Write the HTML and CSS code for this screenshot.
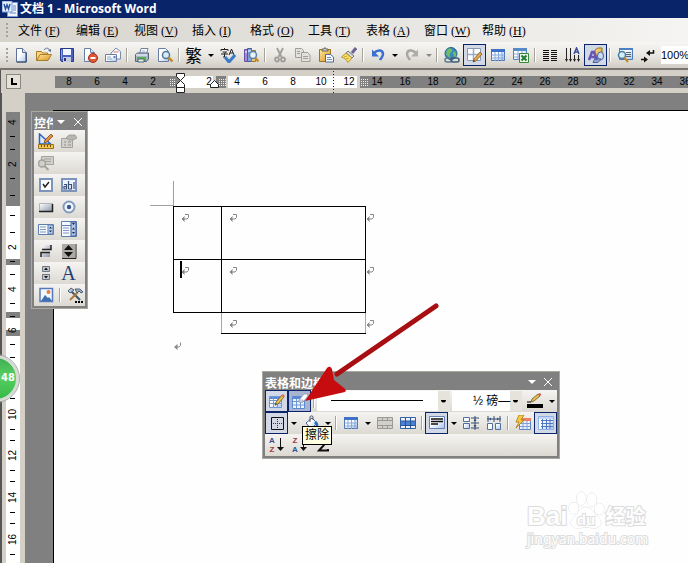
FILE: index.html
```html
<!DOCTYPE html>
<html lang="zh-CN">
<head>
<meta charset="utf-8">
<title>文档 1 - Microsoft Word</title>
<link rel="stylesheet" href="styles.css">
</head>
<body>
<svg class="sprite" aria-hidden="true">
  <defs>
    <linearGradient id="sheet" x1="0" y1="0" x2="1" y2="1"><stop offset=".4" stop-color="#fff"/><stop offset="1" stop-color="#a9c4ec"/></linearGradient>
    <linearGradient id="metal" x1="0" y1="0" x2="1" y2="1"><stop offset="0" stop-color="#fff"/><stop offset="1" stop-color="#8a94a6"/></linearGradient>
    <linearGradient id="gold" x1="0" y1="0" x2="1" y2="1"><stop offset="0" stop-color="#ffe9a0"/><stop offset="1" stop-color="#d8941c"/></linearGradient>
  </defs>
  <symbol id="new" viewBox="0 0 16 16"><path d="M3.500 1.500h6l4 4v9.500h-10z" fill="url(#sheet)" stroke="#5b7199"/><path d="M9.500 1.500v4h4" fill="#d5e2f6" stroke="#5b7199"/><path d="M13 6v9H4" fill="none" stroke="#2c3f66"/></symbol>
  <symbol id="open" viewBox="0 0 16 16"><path d="M.5 13.500V4.500h5l1 1.500h5v3" fill="#f8d878" stroke="#a97c2a"/><path d="M.8 13.500L4 7.500h11.500l-3.500 6z" fill="url(#gold)" stroke="#a97c2a"/><path d="M8 3c2-3 5-2 6 1" fill="none" stroke="#5b7199"/><path d="M12 3.500l3 1.500V2z" fill="#5b7199"/></symbol>
  <symbol id="save" viewBox="0 0 16 16"><path d="M1.500 1.500h13v13h-12l-1-1z" fill="#4b62bd" stroke="#2a3a8a"/><path d="M4 2h8v6H4z" fill="#f2f6ff"/><path d="M4 10h8v5H4z" fill="#c4cbe2"/><path d="M5 11h2v3H5z" fill="#26327a"/><path d="M2.500 3v9" stroke="#8d9ee8"/></symbol>
  <symbol id="perm" viewBox="0 0 16 16"><path d="M2.500 1.500h6l4 4v9h-10z" fill="url(#sheet)" stroke="#6b7fa5"/><path d="M8.500 1.500v4h4" fill="#dce7f8" stroke="#6b7fa5"/><circle cx="11" cy="11" r="4.500" fill="#dd5836" stroke="#a5321a"/><path d="M8.500 11h5" stroke="#fff" stroke-width="2"/></symbol>
  <symbol id="mail" viewBox="0 0 16 16"><path d="M6 6l5-5 4.500 3.500V12H6z" fill="#f3f6fc" stroke="#7b8dad"/><path d="M8 5h6v4H8z" fill="#fff"/><path d="M8.500 5h5" stroke="#d47a6b"/><path d="M.5 7.500h11v7H.5z" fill="url(#sheet)" stroke="#6b7fa5"/><path d="M2 10h4M2 12h5" stroke="#8fa4c8"/><path d="M8.500 9h2v2h-2z" fill="#6482bd"/></symbol>
  <symbol id="print" viewBox="0 0 16 16"><path d="M5.500 7l1.500-5.500h7L12.500 7z" fill="#fff" stroke="#72819a"/><path d="M7.500 4h4M7 6h4" stroke="#95b3df"/><path d="M1.500 7.500l2-1.500h11v6l-2 2.500h-11z" fill="#a8b5cb" stroke="#55637d"/><path d="M2 8h11" stroke="#fff"/><path d="M3 10h9v4H3z" fill="#51b648"/><path d="M4 12h6v3H4z" fill="#dff5d9" stroke="#55637d"/></symbol>
  <symbol id="preview" viewBox="0 0 16 16"><path d="M1.500 1.500h7l3 3v10h-10z" fill="url(#sheet)" stroke="#6b7fa5"/><circle cx="9" cy="8" r="3.500" fill="#d7ebf8" stroke="#53779b" stroke-width="1.500"/><path d="M11.500 10.500l4 4" stroke="#c78b2a" stroke-width="2.500"/></symbol>
  <symbol id="spell" viewBox="0 0 16 16"><path d="M1 4V2.500h7V4M4.500 1v1M2.500 5h4l-2 1.500V10H3M1 7h7" fill="none" stroke="#222"/><path d="M9 8l2.500-6L14 8M10 6h3" fill="none" stroke="#222"/><path d="M5 10l4 5 6-7" fill="none" stroke="#397bc6" stroke-width="3"/></symbol>
  <symbol id="research" viewBox="0 0 16 16"><path d="M1.500 2.500h3v12h-3z" fill="#a58bd5" stroke="#6b4fa5"/><path d="M4.500 1.500h4v13h-4z" fill="#7ea0dc" stroke="#3f5fa0"/><path d="M8.500 3.500h4v11h-4z" fill="#eecb72" stroke="#98772a"/><path d="M5 4h3M2 5h2" stroke="#fff"/><circle cx="10" cy="8" r="3.500" fill="#e5f3fb" stroke="#5c83a8" stroke-width="1.500"/><path d="M12.500 11l3 3.500" stroke="#c78b2a" stroke-width="2.500"/></symbol>
  <symbol id="cut" viewBox="0 0 16 16"><g fill="none" stroke="#a09e98" stroke-width="1.800"><path d="M5 1l4.500 9M11 1L6.500 10"/><circle cx="5" cy="12.500" r="2"/><circle cx="11" cy="12.500" r="2"/></g></symbol>
  <symbol id="copy" viewBox="0 0 16 16"><g fill="#e3e1dc" stroke="#a09e98"><path d="M.5 1.500h6l2 2v7h-8z"/><path d="M6.500 5.500h6l2.500 2.500v6.500H6.500z"/><path d="M2 4.500h3M2 6.500h3M8 9.500h5M8 11.500h5"/></g></symbol>
  <symbol id="paste" viewBox="0 0 16 16"><path d="M1.500 2.500h11v12h-11z" fill="url(#gold)" stroke="#9d7421"/><path d="M4 4V2h2l1-1.500L8 2h2v2z" fill="#c5cad4" stroke="#6e6754"/><path d="M7.500 7.500h5l3 2.500v5h-8z" fill="#f5f8ff" stroke="#536b9c"/><path d="M9 10.500h4M9 12.500h5" stroke="#7792c5"/></symbol>
  <symbol id="brush" viewBox="0 0 16 16"><path d="M15 1l-4 5" stroke="#706397" stroke-width="3"/><path d="M7 4l6 5-2 2-6-5z" fill="#d5daea" stroke="#777"/><path d="M5 6l6 5-4 4.500C5 12 3 11 .5 10z" fill="#f8dc68" stroke="#b39630"/><path d="M3 10l3-1M5 12l3-1" stroke="#c9a735"/></symbol>
  <symbol id="undo" viewBox="0 0 16 16"><path d="M4 6c4-4 9-3 9 1 0 3-2 4-3 6" fill="none" stroke="#3c6fd0" stroke-width="2.500"/><path d="M2 2.500v7h7z" fill="#3c6fd0"/></symbol>
  <symbol id="redo" viewBox="0 0 16 16"><path d="M12 6C8 2 3 3 3 7c0 3 2 4 3 6" fill="none" stroke="#a9a7a1" stroke-width="2.500"/><path d="M14 2.500v7H7z" fill="#b0aea8"/></symbol>
  <symbol id="link" viewBox="0 0 16 16"><circle cx="7" cy="6.500" r="6" fill="#378abf" stroke="#256184"/><path d="M3 3c3-3 6-1 5 1S5 6 6 9s-3 0-4-2zM9 5c2-1 4 1 3 4S9 8 9 5" fill="#70bd63"/><rect x="1" y="11" width="7" height="4" rx="2" fill="none" stroke="#5d7a91" stroke-width="1.500"/><rect x="7" y="11" width="8" height="4" rx="2" fill="none" stroke="#3c5d77" stroke-width="1.500"/></symbol>
  <symbol id="grid" viewBox="0 0 16 16"><path d="M1.500 2.500h13v11h-13z" fill="url(#sheet)" stroke="#4d72b0"/><path d="M1 2h14v3H1z" fill="#3d72c8"/><path d="M1.500 8h13M1.500 11h13M5 5v9M8.500 5v9M12 5v9" stroke="#87a9dc"/></symbol>
  <symbol id="gridoutline" viewBox="0 0 16 16"><path d="M.5 1.500h15v13H.5z" fill="url(#sheet)" stroke="#8fb0e6"/><path d="M3 5.500h12M3 8.500h12M3 11.500h12M4.500 4v10M8.500 4v10M12 4v10" stroke="#4d79c4"/><path d="M1 3h14" stroke="#c4d7f5" stroke-width="2"/></symbol>
  <symbol id="drawtable" viewBox="0 0 16 16"><path d="M.5 3.500h12v11H.5z" fill="url(#sheet)" stroke="#6f97d8"/><path d="M1 4h12v2H1z" fill="#5b8ad4"/><path d="M1 7.500h11M1 10.500h11M4.500 4v10M8.500 4v10" stroke="#7598d2"/><path d="M6 12l1-3 6-7 2 2-6 7z" fill="#e8bd4c" stroke="#765b22" stroke-width=".8"/><path d="M12.500 2.500l2 2L16 3l-2-2z" fill="#d96f57"/><path d="M6 12l1-2 1 1z" fill="#333"/></symbol>
  <symbol id="plaindraw" viewBox="0 0 16 16"><path d="M.5 1.500h13v12H.5z" fill="#fff" stroke="#8799b7"/><path d="M1 7.500h12M6.500 2v11" stroke="#9caac2" stroke-width="1.500"/><path d="M6 15l1-3 6-7 2 2-6 7z" fill="#e6a64a" stroke="#765b22" stroke-width=".8"/><path d="M6 15l1-2 1 1z" fill="#333"/></symbol>
  <symbol id="erase" viewBox="0 0 16 16"><path d="M.5 3.500h12v12H.5z" fill="#eef4ff" stroke="#5b8ad4"/><path d="M1 4h12v2H1z" fill="#5b8ad4"/><path d="M1 8.500h11M1 12h11M4.500 6v9M8.500 6v9" stroke="#6f97d8"/><path d="M7 7l5-6h3.500l.5 2-5 6H7z" fill="#fff" stroke="#8c95a8" stroke-width=".8"/><path d="M7 7h4v2H7z" fill="#dfe3ec" stroke="#8c95a8" stroke-width=".6"/></symbol>
  <symbol id="excel" viewBox="0 0 16 16"><path d="M.5 1.500h13v11H.5z" fill="url(#sheet)" stroke="#5a7fb8"/><path d="M0 1h14v3H0z" fill="#568ac9"/><path d="M1 7h12M1 10h12M5 4v9M9 4v9" stroke="#8dadd8"/><path d="M6.500 6.500h9v9h-9z" fill="#e9f5e6" stroke="#3b8540"/><path d="M8.500 8.500l5 5M13.500 8.500l-5 5" stroke="#257a32" stroke-width="2"/></symbol>
  <symbol id="cols" viewBox="0 0 16 16"><path d="M1 3.500h6M1 5.500h6M1 7.500h6M1 9.500h6M1 11.500h6M1 13.500h6M9 3.500h6M9 5.500h6M9 7.500h6M9 9.500h6M9 11.500h6M9 13.500h6" stroke="#111"/></symbol>
  <symbol id="textdir" viewBox="0 0 16 16"><path d="M1.500 1v13M5.500 1v13M9.500 8v6M13.500 8v6" stroke="#222"/><path d="M0 12h3l-1.500 3zM4 12h3l-1.500 3zM8 12h3l-1.500 3zM12 12h3l-1.500 3z" fill="#222"/><path d="M9 7l2.500-6L14 7M10 5h3" fill="none" stroke="#3a4b9f" stroke-width="1.500"/></symbol>
  <symbol id="shapes" viewBox="0 0 16 16"><path d="M7 3l3-2h4v5l-3 3H7z" fill="url(#gold)" stroke="#94711f"/><ellipse cx="12.500" cy="9" rx="3" ry="4" fill="#c9daf2" stroke="#4c6596"/><path d="M7 11l6 1-3 3.500H5z" fill="#8fa6d4" stroke="#4c6596"/><path d="M1 13L4 5h2l3 8M2.500 10h5" fill="none" stroke="#6656b5" stroke-width="2.500"/></symbol>
  <symbol id="docmap" viewBox="0 0 16 16"><path d="M2.500 1.500h13v11h-13z" fill="url(#sheet)" stroke="#4b78b9"/><path d="M2 1h14v2H2z" fill="#4b80c9"/><path d="M9 5.500h5M9 7.500h5M9 9.500h5" stroke="#567"/><circle cx="5" cy="8" r="3.500" fill="#d5edf8" stroke="#477da3" stroke-width="1.500"/><path d="M7.500 10.500l3.500 4.500" stroke="#c78b2a" stroke-width="2.200"/></symbol>
  <symbol id="para" viewBox="0 0 16 16"><path d="M13.500 3v3H8M1 12.500h4" fill="none" stroke="#111" stroke-width="1.500"/><path d="M10 3v6L6 6zM4 9.500v6l4-3z" fill="#111"/></symbol>
  <symbol id="design" viewBox="0 0 16 16"><path d="M1.500 1v10h11z" fill="#dce9fc" stroke="#2b63bd" stroke-width="1.500"/><path d="M6 10l1-3 6-6 2 2-6 6z" fill="#e68d3e" stroke="#774d25" stroke-width=".8"/><path d="M.5 11.500h15v4H.5z" fill="#f5c84c" stroke="#9c7321"/><path d="M3.500 12v2M6.500 12v2M9.500 12v2M12.500 12v2" stroke="#6a501e"/></symbol>
  <symbol id="props" viewBox="0 0 16 16"><g fill="#d2d0ca" stroke="#a3a19b"><path d="M.5 5.500h11v9H.5z"/><path d="M5 5l3-3h6l2 3-4 2H8z" fill="#b7b5af"/><path d="M3 9h2M3 12h2M7 9h3M7 12h3" stroke="#918f89"/></g></symbol>
  <symbol id="code" viewBox="0 0 16 16"><g fill="#d2d0ca" stroke="#a3a19b"><path d="M3.500 1.500h12v8h-12z"/><path d="M6 4h7M6 6.500h7"/><circle cx="4" cy="8.500" r="3.500" stroke-width="1.500"/><path d="M6.500 11l4 4" stroke-width="2"/></g></symbol>
  <symbol id="check" viewBox="0 0 16 16"><path d="M2 2h12v12H2z" fill="#fff" stroke="#7b93bd" stroke-width="2"/><path d="M5 7l2 3 4-5" fill="none" stroke="#222" stroke-width="1.500"/></symbol>
  <symbol id="textbox" viewBox="0 0 16 16"><path d="M1 2h14v12H1z" fill="#edf4ff" stroke="#7b93bd" stroke-width="2"/><path d="M3 7.500h2.500V12H3V9.500h2M7.500 4v8h3V7.500h-3M13 5v7" fill="none" stroke="#3b4e78" stroke-width="1.200"/></symbol>
  <symbol id="button" viewBox="0 0 16 16"><path d="M1.500 4.500h13v8h-13z" fill="url(#metal)" stroke="#aeb5c1"/><path d="M1 12.500h13.500V5" fill="none" stroke="#222" stroke-width="1.500"/></symbol>
  <symbol id="radio" viewBox="0 0 16 16"><circle cx="8" cy="8" r="5.500" fill="#f2f6fd" stroke="#829abd" stroke-width="2"/><circle cx="8" cy="8" r="2.200" fill="#3f5889"/></symbol>
  <symbol id="list" viewBox="0 0 16 16"><path d="M.5 3.500h15v10H.5z" fill="#f4f8ff" stroke="#5e7eaf"/><path d="M2 6h6M2 8.500h6M2 11h6" stroke="#8297bb"/><path d="M10 4h5v9h-5z" fill="#c1d2ed" stroke="#5e7eaf"/><path d="M11 7.500h3L12.500 5.500zM11 9.500h3l-1.500 2z" fill="#182b50"/></symbol>
  <symbol id="combo" viewBox="0 0 16 16"><path d="M.5.5h15v4H.5zM.5 4.500h15v11H.5z" fill="#f4f8ff" stroke="#5e7eaf"/><path d="M10 1h5v14h-5z" fill="#b1c5e6" stroke="#405f95"/><path d="M2 7h6M2 9.500h6M2 12h6" stroke="#8297bb"/><path d="M11 2h3l-1.500 2zM11 8.500h3L12.500 6.500zM11 11h3l-1.500 2z" fill="#182b50"/></symbol>
  <symbol id="toggle" viewBox="0 0 16 16"><path d="M4 2h9v4H4zM3 10h9v4H3z" fill="url(#metal)"/><path d="M4 6.500h9V2M3 14V9.500h9" fill="none" stroke="#222" stroke-width="1.500"/></symbol>
  <symbol id="spin" viewBox="0 0 16 16"><path d="M1 1h13v14H1z" fill="#aaa9a5"/><path d="M1 15.500h14V1" fill="none" stroke="#222"/><path d="M3 7h9L7.500 2zM3 9h9l-4.500 5z" fill="#111"/></symbol>
  <symbol id="scroll" viewBox="0 0 16 16"><path d="M4.500 1.500h7v5h-7zM4.500 9.500h7v5h-7z" fill="#c4c8ce" stroke="#6d7683"/><path d="M6 5h4L8 2.500zM6 11h4l-2 2.500z" fill="#111"/></symbol>
  <symbol id="image" viewBox="0 0 16 16"><path d="M2 1.500h12.500v13H2z" fill="#f1f6ff" stroke="#547abb" stroke-width="1.500"/><path d="M3 14l4-6 3 3 1-1 3 4z" fill="#416eac"/><circle cx="10.500" cy="5" r="2" fill="#e67d43"/></symbol>
  <symbol id="tools" viewBox="0 0 16 16"><path d="M3 3l10 10" stroke="#3c5369" stroke-width="2"/><path d="M1 4l3-3 3 2-4 3z" fill="#b5c5d5" stroke="#506579"/><path d="M3 13l8-8" stroke="#ad7a39" stroke-width="2"/><path d="M8 2h5l3 3-2 1-2-2-2 2z" fill="#9aabb9" stroke="#506579"/><path d="M8 15h2M11 15h2M14 15h2" stroke="#000" stroke-width="2"/></symbol>
  <symbol id="borders" viewBox="0 0 16 16"><path d="M2.500 2.500h12v12h-12z" fill="none" stroke="#111"/><path d="M4 8.500h10M8.500 4v10" stroke="#333" stroke-dasharray="1 1"/></symbol>
  <symbol id="bucket" viewBox="0 0 16 16"><path d="M3 8l6-5 5 5-6 6z" fill="url(#sheet)" stroke="#496590"/><path d="M7 7V2c0-1.500 3-1.500 3 0v3" fill="none" stroke="#556"/><path d="M13 6c2 1 3 4 2 7-2-1-2-3-4-5z" fill="#2e71bd"/><path d="M1 12h5v3H1z" fill="#f3e7a1"/></symbol>
  <symbol id="merge" viewBox="0 0 16 16"><path d="M.5 2.500h15v11H.5z" fill="#d2d0ca" stroke="#9b9993"/><path d="M1 5.500h14M1 10.500h14M5.500 3v2M5.500 11v2M10.500 3v2M10.500 11v2" stroke="#9b9993"/></symbol>
  <symbol id="split" viewBox="0 0 16 16"><path d="M.5 2.500h15v11H.5z" fill="#eef4ff" stroke="#3461a4"/><path d="M1 6h14v4.500H1z" fill="#4a82d5"/><path d="M1 6h14M1 10.500h14M5.500 3v11M10.500 3v11" stroke="#295498"/></symbol>
  <symbol id="align" viewBox="0 0 16 16"><path d="M.5 1.500h15v12H.5z" fill="url(#sheet)" stroke="#6482b5"/><path d="M2 4h12M2 6.500h12M2 9h7" stroke="#111" stroke-width="1.300"/></symbol>
  <symbol id="distrows" viewBox="0 0 16 16"><path d="M.5 2.500h6v4h-6zM.5 8.500h6v5h-6z" fill="url(#sheet)" stroke="#536f9c"/><path d="M8 3h8M8 8h8M8 13h8M12 1v14" stroke="#344d75"/><path d="M10.500 6h3L12 3.500zM10.500 10h3L12 12.500z" fill="#344d75"/></symbol>
  <symbol id="distcols" viewBox="0 0 16 16"><path d="M1.500 8.500h5v6h-5zM9.500 8.500h5v6h-5z" fill="url(#sheet)" stroke="#536f9c"/><path d="M2 1v6M8 1v6M14 1v6M1 4h14" stroke="#344d75"/><path d="M3 4l2-1.500v3zM13 4l-2-1.500v3z" fill="#344d75"/></symbol>
  <symbol id="autofmt" viewBox="0 0 16 16"><path d="M4.500 3.500h11v11h-11z" fill="#e9f1ff" stroke="#6185c5"/><path d="M4 3h12v3H4z" fill="#e98262"/><path d="M5 8.500h10M5 11.500h10M8 6v8M12 6v8" stroke="#82a0d5"/><path d="M4 0h5L6 5h3L1 13l3-6H1z" fill="#f9cb3a" stroke="#a37824" stroke-width=".8"/></symbol>
  <symbol id="pen" viewBox="0 0 16 16"><path d="M4 9l1-3 6-5 2 2-6 5z" fill="#e7bb4f" stroke="#6c5928" stroke-width=".8"/><path d="M11 1l2 2 1.500-1L13 0z" fill="#cf5e55"/><path d="M0 9h4" stroke="#000"/><path d="M0 11h16v4H0z"/></symbol>
  <symbol id="ret" viewBox="0 0 8 8"><path d="M4 .5h3.500V3.500L6 5H2M3.500 2.500L1 5l2.500 2.500" fill="none" stroke="#888"/><path d="M3.500 3v4L1 5z" fill="#888"/></symbol>
  <symbol id="retend" viewBox="0 0 8 8"><path d="M6.500 .5V3.500L5 5H2" fill="none" stroke="#888"/><path d="M3.500 2v6L0 5z" fill="#888"/></symbol>
</svg>

<div class="app">
  <header class="titlebar">
    <svg class="logo" viewBox="0 0 16 16" aria-hidden="true"><path d="M5.500 1.500h10v14h-10z" fill="#edf3ff" stroke="#7c9bd6"/><path d="M11 5h3M11 7h3M11 9h3M8 12h6" stroke="#6b8ac3"/><path d="M0 0h10v11H0z" fill="#e6eefc" stroke="#739ad8"/><path d="M2 3l1.500 5L5 4l1.500 4L8 3" fill="none" stroke="#2253a4" stroke-width="1.500"/></svg>
    <h1>文档 1 - Microsoft Word</h1>
  </header>
  <nav class="menubar" aria-label="菜单栏">
    <i class="grip"></i>
    <button>文件<span>(<u>F</u>)</span></button><button>编辑<span>(<u>E</u>)</span></button><button>视图<span>(<u>V</u>)</span></button><button>插入<span>(<u>I</u>)</span></button><button>格式<span>(<u>O</u>)</span></button><button>工具<span>(<u>T</u>)</span></button><button>表格<span>(<u>A</u>)</span></button><button>窗口<span>(<u>W</u>)</span></button><button>帮助<span>(<u>H</u>)</span></button>
  </nav>
  <div class="toolbar" role="toolbar" aria-label="常用">
    <i class="grip"></i>
    <button class="tool" aria-label="新建"><svg><use href="#new"/></svg></button>
    <button class="tool" aria-label="打开"><svg><use href="#open"/></svg></button>
    <button class="tool" aria-label="保存"><svg><use href="#save"/></svg></button>
    <button class="tool" aria-label="权限"><svg><use href="#perm"/></svg></button>
    <button class="tool" aria-label="电子邮件"><svg><use href="#mail"/></svg></button>
    <i class="sep"></i>
    <button class="tool" aria-label="打印"><svg><use href="#print"/></svg></button>
    <button class="tool" aria-label="打印预览"><svg><use href="#preview"/></svg></button>
    <i class="sep"></i>
    <button class="tool glyph">繁</button>
    <button class="caret" aria-label="中文转换选项"></button>
    <button class="tool" aria-label="拼写和语法"><svg><use href="#spell"/></svg></button>
    <button class="tool" aria-label="信息检索"><svg><use href="#research"/></svg></button>
    <i class="sep"></i>
    <button class="tool" aria-label="剪切"><svg><use href="#cut"/></svg></button>
    <button class="tool" aria-label="复制"><svg><use href="#copy"/></svg></button>
    <button class="tool" aria-label="粘贴"><svg><use href="#paste"/></svg></button>
    <button class="tool" aria-label="格式刷"><svg><use href="#brush"/></svg></button>
    <i class="sep"></i>
    <button class="tool" aria-label="撤消"><svg><use href="#undo"/></svg></button>
    <button class="caret" aria-label="撤消选项"></button>
    <button class="tool" aria-label="恢复"><svg><use href="#redo"/></svg></button>
    <button class="caret dim" aria-label="恢复选项"></button>
    <i class="sep"></i>
    <button class="tool" aria-label="插入超链接"><svg><use href="#link"/></svg></button>
    <button class="tool on" aria-label="表格和边框"><svg><use href="#plaindraw"/></svg></button>
    <button class="tool" aria-label="插入表格"><svg><use href="#grid"/></svg></button>
    <button class="tool" aria-label="插入 Excel 工作表"><svg><use href="#excel"/></svg></button>
    <i class="sep"></i>
    <button class="tool" aria-label="分栏"><svg><use href="#cols"/></svg></button>
    <button class="tool" aria-label="更改文字方向"><svg><use href="#textdir"/></svg></button>
    <button class="tool on" aria-label="绘图"><svg><use href="#shapes"/></svg></button>
    <i class="sep"></i>
    <button class="tool" aria-label="文档结构图"><svg><use href="#docmap"/></svg></button>
    <button class="tool" aria-label="显示编辑标记"><svg><use href="#para"/></svg></button>
    <select class="zoom" aria-label="显示比例"><option>100%</option></select>
  </div>

  <div class="ruler">
    <button class="tabstop" aria-label="制表符"></button>
    <div class="scale">
      <span>8</span><span>6</span><span>4</span><span>2</span><span></span><span>2</span><span>4</span><span>6</span><span>8</span><span>10</span><span>12</span><span>14</span><span>16</span><span>18</span><span>20</span><span>22</span><span>24</span><span>26</span><span>28</span><span>30</span><span>32</span><span>34</span><span>36</span>
      <svg class="markers" viewBox="0 0 330 24" aria-hidden="true">
        <g fill="#fff" stroke="#222"><path d="M121.500 2.500h8v3l-4 4-4-4zM121.500 16.500v-3l4-4 4 4v3zM121.500 16.500h8v5h-8z"/><path d="M155.500 16.500v-3l4-4 4 4v3z"/></g>
        <g stroke="#eee" stroke-dasharray="1 1"><path d="M115 8.500h6M115 10.500h6M115 12.500h6M115 14.500h6M164 8.500h7M164 10.500h7M164 12.500h7M164 14.500h7M306 8.500h8M306 10.500h8M306 12.500h8M306 14.500h8"/></g>
        <path d="M278.500 0v23" stroke="#222" stroke-dasharray="1 2"/>
      </svg>
    </div>
  </div>

  <main class="workspace">
    <div class="vruler">
      <div class="vband"><div class="vscale">
        <span>4</span><span>2</span><span></span><span>2</span><span>4</span><span>6</span><span>8</span><span>10</span><span>12</span><span>14</span><span>16</span>
      </div></div>
    </div>
    <section class="desk">
      <article class="page">
        <table class="doc">
          <tr><td class="box first"><svg><use href="#ret"/></svg></td><td class="box"><svg><use href="#ret"/></svg></td><td class="end"><svg><use href="#ret"/></svg></td></tr>
          <tr><td class="box first"><i class="cursor"></i><svg><use href="#ret"/></svg></td><td class="box"><svg><use href="#ret"/></svg></td><td class="end"><svg><use href="#ret"/></svg></td></tr>
          <tr class="short"><td></td><td class="ghost"><svg><use href="#ret"/></svg></td><td class="end"><svg><use href="#ret"/></svg></td></tr>
        </table>
        <svg class="mark"><use href="#retend"/></svg>
      </article>
    </section>
  </main>

  <svg class="corner" viewBox="0 0 24 25" aria-hidden="true"><path d="M23.500 0v25M0 24.500h24" stroke="#a0a0a0"/></svg>

  <aside class="palette controls" aria-label="控件工具箱">
    <header><b>控件</b><i class="down"></i><button class="close" aria-label="关闭"></button></header>
    <div class="pair"><button aria-label="设计模式"><svg><use href="#design"/></svg></button><button aria-label="属性"><svg><use href="#props"/></svg></button></div>
    <div class="pair"><button aria-label="查看代码"><svg><use href="#code"/></svg></button></div>
    <div class="pair"><button aria-label="复选框"><svg><use href="#check"/></svg></button><button aria-label="文本框"><svg><use href="#textbox"/></svg></button></div>
    <div class="pair"><button aria-label="命令按钮"><svg><use href="#button"/></svg></button><button aria-label="选项按钮"><svg><use href="#radio"/></svg></button></div>
    <div class="pair"><button aria-label="列表框"><svg><use href="#list"/></svg></button><button aria-label="组合框"><svg><use href="#combo"/></svg></button></div>
    <div class="pair"><button aria-label="切换按钮"><svg><use href="#toggle"/></svg></button><button aria-label="数值调节钮"><svg><use href="#spin"/></svg></button></div>
    <div class="pair"><button aria-label="滚动条"><svg><use href="#scroll"/></svg></button><button class="label-tool">A</button></div>
    <div class="pair"><button aria-label="图像"><svg><use href="#image"/></svg></button><i class="sep"></i><button aria-label="其他控件"><svg><use href="#tools"/></svg></button></div>
  </aside>

  <aside class="palette borders" aria-label="表格和边框">
    <header><b>表格和边框</b><i class="down"></i><button class="close" aria-label="关闭"></button></header>
    <div class="row">
      <button class="tool on" aria-label="绘制表格"><svg><use href="#drawtable"/></svg></button>
      <button class="tool on hot" aria-label="擦除"><svg><use href="#erase"/></svg></button>
      <i class="sep"></i>
      <select class="pick line" aria-label="线型"><option aria-label="实线"></option></select>
      <select class="pick weight" aria-label="粗细"><option>½ 磅—</option></select>
      <button class="tool" aria-label="边框颜色"><svg><use href="#pen"/></svg></button>
      <button class="caret" aria-label="边框颜色选项"></button>
    </div>
    <div class="row">
      <button class="tool on" aria-label="外侧框线"><svg><use href="#borders"/></svg></button>
      <button class="caret" aria-label="框线选项"></button>
      <button class="tool" aria-label="底纹颜色"><svg><use href="#bucket"/></svg></button>
      <button class="caret" aria-label="底纹选项"></button>
      <i class="sep"></i>
      <button class="tool" aria-label="插入表格"><svg><use href="#grid"/></svg></button>
      <button class="caret" aria-label="插入选项"></button>
      <button class="tool" aria-label="合并单元格"><svg><use href="#merge"/></svg></button>
      <button class="tool" aria-label="拆分单元格"><svg><use href="#split"/></svg></button>
      <i class="sep"></i>
      <button class="tool on" aria-label="对齐方式"><svg><use href="#align"/></svg></button>
      <button class="caret" aria-label="对齐选项"></button>
      <button class="tool" aria-label="平均分布各行"><svg><use href="#distrows"/></svg></button>
      <button class="tool" aria-label="平均分布各列"><svg><use href="#distcols"/></svg></button>
      <i class="sep"></i>
      <button class="tool" aria-label="自动套用格式"><svg><use href="#autofmt"/></svg></button>
      <button class="tool on" aria-label="隐藏虚框"><svg><use href="#gridoutline"/></svg></button>
    </div>
    <div class="row">
      <button class="tool sort" aria-label="升序排序"><span><b class="blue">A</b><b class="red">Z</b></span><svg viewBox="0 0 7 16"><path d="M3.500 1v12" stroke="#111"/><path d="M0 10h7l-3.500 4z" fill="#111"/></svg></button>
      <button class="tool sort" aria-label="降序排序"><span><b class="red">Z</b><b class="blue">A</b></span><svg viewBox="0 0 7 16"><path d="M3.500 1v12" stroke="#111"/><path d="M0 10h7l-3.500 4z" fill="#111"/></svg></button>
      <button class="tool" aria-label="自动求和"><svg viewBox="0 0 16 16"><path d="M13 4V2H4l5 6-5 5.500h9V12" fill="none" stroke="#111" stroke-width="2"/></svg></button>
    </div>
  </aside>
  <div class="tooltip" role="tooltip">擦除</div>
  <svg class="arrow" viewBox="0 0 140 104" aria-hidden="true"><path d="M134 8L35 76" stroke="#a80f12" stroke-width="5" stroke-linecap="round"/><path d="M3 103L25 70q3-3 5 1l2 11 10 8q3 2 1 4z" fill="#c60c0f"/></svg>
  <div class="ball">48</div>
  <div class="watermark">
    <div class="brand">Bai<svg viewBox="0 0 40 40" aria-hidden="true"><g fill="#fff" stroke="#dcdcdc"><ellipse cx="7" cy="18" rx="5" ry="6"/><ellipse cx="15" cy="8" rx="5" ry="7"/><ellipse cx="26" cy="9" rx="5" ry="7"/><ellipse cx="34" cy="19" rx="5" ry="6"/><path d="M20 17c6 0 7 6 13 11 6 6 1 12-6 11-5-1-9-1-14 0-8 1-12-6-6-11 6-5 7-11 13-11z"/></g><text x="20" y="36" text-anchor="middle">du</text></svg><span>经验</span></div>
    <div class="site">jingyan.baidu.com</div>
  </div>
</div>
</body>
</html>
```
FILE: styles.css
```css
* { box-sizing: border-box; }
body { margin: 0; font: 12px "Liberation Sans", "Noto Sans CJK SC", sans-serif; color: #000; }
button, select { margin: 0; padding: 0; border: 0; background: none; font: inherit; color: inherit; border-radius: 0; appearance: none; }
svg { display: block; flex: none; }
.sprite { position: absolute; width: 0; height: 0; }
.app { position: relative; display: flex; flex-direction: column; height: 100vh; overflow: hidden; background: #d4d0c8; }

.titlebar { flex: none; display: flex; align-items: center; gap: 2px; height: 18px; padding-left: 2px; background: #0a246a; color: #fff; }
.titlebar h1 { margin: 0; font: bold 12px/18px "Open Sans", "Noto Sans CJK SC", sans-serif; white-space: pre; }
.logo { width: 16px; height: 16px; }

.menubar { flex: none; display: flex; align-items: center; height: 24px; padding-left: 5px; background: linear-gradient(90deg, #d6d3cc, #f5f4f2); }
.menubar button { width: 58px; padding-left: 8px; text-align: left; white-space: nowrap; }
.menubar span { margin-left: 3px; font: 12px "Liberation Serif", serif; }
.grip { flex: none; width: 4px; height: 15px; background: repeating-linear-gradient(#a6a39b 0 2px, transparent 2px 4px) 1px 0 / 2px 15px no-repeat; }
.menubar .grip { width: 5px; }

.toolbar { flex: none; display: flex; align-items: center; height: 28px; padding-left: 5px; border-bottom: 2px solid #77756f; background: linear-gradient(#f7f6f4, #e9e7e2 50%, #d2cec5); }
.tool { flex: none; display: flex; align-items: center; justify-content: center; width: 23px; height: 22px; }
.tool svg { width: 16px; height: 16px; }
.tool.on { border: 1px solid #0a246a; background: #d3d8e6; }
.tool.hot { background: #a9b4d0; }
.glyph { font: 17px/20px "Noto Sans CJK SC", sans-serif; }
.caret { flex: none; width: 11px; height: 22px; display: flex; align-items: center; justify-content: center; }
.caret::before { content: ""; border: 3px solid transparent; border-top-color: #000; border-bottom: 0; }
.caret.dim::before { border-top-color: #888; }
.sep { flex: none; width: 6px; height: 16px; background: linear-gradient(90deg, #a6a39b 50%, #fff 50%) center / 2px 14px no-repeat; }
.zoom { flex: 1 0 auto; height: 18px; margin-left: 2px; background: #fff; font-size: 11px; }

.ruler { flex: none; display: flex; align-items: center; gap: 34px; height: 23px; padding-left: 5px; border-left: 1px solid #555; }
.tabstop { flex: none; width: 15px; height: 15px; border: 1px solid #8b8880; background: linear-gradient(#000, #000) 4px 3px / 2px 7px no-repeat, linear-gradient(#000, #000) 4px 8px / 6px 2px no-repeat, #e4e1da; }
.scale { position: relative; flex: 1; display: flex; height: 12px; font: 10px/12px "Liberation Sans", sans-serif; background: linear-gradient(90deg, #808080 126px, #fff 126px 158px, #d4d0c8 158px 161px, #808080 161px 171px, #d4d0c8 171px 173px, #fff 173px 302px, #d4d0c8 302px 305px, #808080 305px); }
.scale span { flex: none; width: 28px; text-align: center; }
.markers { position: absolute; left: 0; top: -5px; width: 330px; height: 24px; }

.workspace { flex: 1; min-height: 0; display: flex; }
.vruler { flex: none; width: 25px; padding: 19px 5px 0 4px; border-left: 2px solid #555; }
.vband { height: 100%; overflow: hidden; background: linear-gradient(#808080 94px, #fff 94px 147px, #808080 147px 153px, #fff 153px 200px, #808080 200px 206px, #fff 206px 218px, #808080 218px 224px, #fff 224px); }
.vscale { display: grid; grid-template-rows: repeat(4, 42px 42px 41px); margin-top: -11px; font: 10px/12px "Liberation Sans", sans-serif; }
.vscale span { display: flex; align-items: center; justify-content: space-around; writing-mode: vertical-rl; transform: rotate(180deg); width: 13px; }
.vscale span::before, .vscale span::after { content: ""; width: 5px; height: 1px; background: #000; }
.desk { flex: 1; padding: 17px 0 0 28px; background: #808080; }
.page { height: 100%; padding: 95px 0 0 119px; border: solid #000; border-width: 1px 0 0 1px; background: #fefefe; }

.doc { border-collapse: collapse; }
.doc td { height: 53px; padding: 7px 0 0 7px; vertical-align: top; }
.doc .short td { height: 21px; }
.doc svg, .mark { width: 8px; height: 8px; }
.doc .box { width: 144px; border: 1px solid #000; }
.doc .first { width: 48px; position: relative; }
.doc .ghost { border: 1px solid #a8a8a8; border-bottom-color: #000; }
.doc .end { width: 14px; padding-left: 0; }
.cursor { position: absolute; left: 6px; top: 1px; width: 2px; height: 17px; background: #000; }
.mark { margin: 8px 0 0 1px; }
.corner { position: absolute; left: 150px; top: 181px; width: 24px; height: 25px; }

.palette { position: absolute; border: 3px solid #808080; outline: 1px solid #aaa7a0; outline-offset: -1px; background: #e8e6e1; }
.palette header { display: flex; align-items: center; height: 16px; background: #808080; color: #fff; white-space: nowrap; }
.palette header b { flex: 1; overflow: hidden; }
.down { flex: none; border: 4px solid transparent; border-top-color: #fff; border-bottom: 0; }
.close { flex: none; width: 18px; height: 14px; background: linear-gradient(45deg, transparent 44%, #fff 44% 56%, transparent 56%) center / 8px 8px no-repeat, linear-gradient(-45deg, transparent 44%, #fff 44% 56%, transparent 56%) center / 8px 8px no-repeat; }
.controls { left: 31px; top: 111px; width: 57px; }
.controls header b { flex: none; width: 19px; margin-right: 4px; }
.controls .down { margin-right: 4px; }
.pair { display: flex; align-items: center; height: 22px; background: linear-gradient(#f5f4f2, #dcd9d2); }
.pair button { flex: none; display: flex; align-items: center; justify-content: center; width: 23px; height: 22px; }
.pair button svg { width: 16px; height: 16px; }
.pair .label-tool { font: 20px/22px "Liberation Serif", serif; color: #203f75; }
.borders { left: 262px; top: 371px; width: 298px; }
.borders .down { margin-right: 3px; }
.row { display: flex; align-items: center; height: 22px; background: linear-gradient(#f5f4f2, #dcd9d2); }
.pick { height: 20px; }
.line { width: 133px; margin-right: 2px; background: linear-gradient(#000, #000) 14px 9px / 92px 1px no-repeat, radial-gradient(circle at 50% 0, #000 2px, transparent 3px) 123px 9px / 7px 4px no-repeat, linear-gradient(#e6e3dd, #e6e3dd) right / 12px 20px no-repeat, #fff; }
.weight { width: 70px; padding-left: 21px; margin-right: 1px; background: radial-gradient(circle at 50% 0, #000 2px, transparent 3px) 60px 9px / 7px 4px no-repeat, linear-gradient(#e6e3dd, #e6e3dd) right / 12px 20px no-repeat, #fff; }
.sort { gap: 2px; }
.sort span { display: flex; flex-direction: column; font: 8px/9px "Liberation Sans", sans-serif; }
.sort svg { width: 7px; }
.blue { color: #33518f; }
.red { color: #a13a3a; }
.tooltip { position: absolute; left: 302px; top: 426px; padding: 0 2px; border: 1px solid #000; background: #ffffe1; line-height: 17px; }
.arrow { position: absolute; left: 302px; top: 298px; width: 140px; height: 104px; }
.ball { position: absolute; left: -28px; top: 355px; width: 47px; height: 47px; padding-left: 25px; border: 3px solid #d5dcd6; border-radius: 50%; outline: 1px solid #a3aaa5; background: linear-gradient(#3fae51, #58cf62 45%, #35b947); color: #fff; font: bold 11px/39px "DejaVu Sans Condensed", sans-serif; text-align: center; }
.watermark { position: absolute; left: 527px; bottom: 16px; color: #fefefe; -webkit-text-stroke: 2px #dcdcdc; paint-order: stroke; }
.brand { display: flex; align-items: flex-end; font: bold 26px/28px "Liberation Sans", sans-serif; }
.brand svg { width: 38px; height: 40px; -webkit-text-stroke: 0; }
.brand text { font: bold 16px "Liberation Sans", sans-serif; fill: #fefefe; stroke: #dcdcdc; stroke-width: 2px; paint-order: stroke; }
.brand span { font: bold 20px/28px "Noto Sans CJK SC", sans-serif; }
.site { font: 14px/17px "Noto Sans", sans-serif; }
```
